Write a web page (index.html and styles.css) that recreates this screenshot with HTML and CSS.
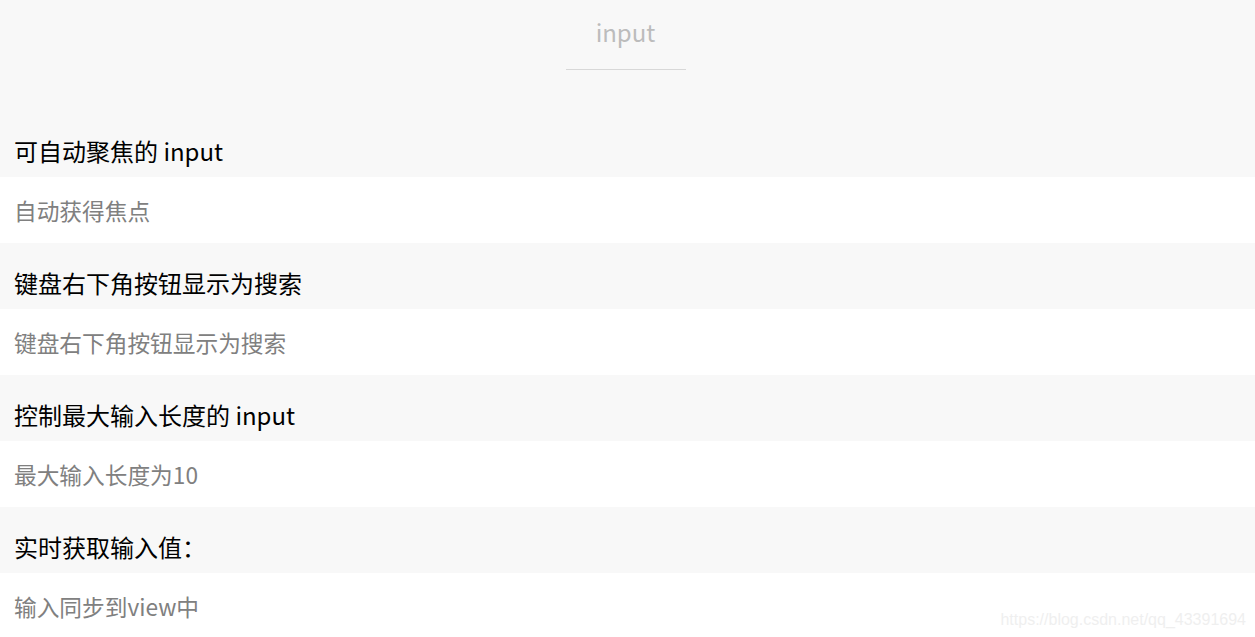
FILE: index.html
```html
<!DOCTYPE html>
<html lang="zh-CN">
<head>
<meta charset="utf-8">
<title>input</title>
<link rel="stylesheet" href="styles.css">
</head>
<body>
<div class="page">
  <div class="header">
    <div class="header-title">input</div>
    <div class="header-line"></div>
  </div>
  <div class="section">
    <div class="label">可自动聚焦的 input</div>
    <div class="field">自动获得焦点</div>
  </div>
  <div class="section">
    <div class="label">键盘右下角按钮显示为搜索</div>
    <div class="field">键盘右下角按钮显示为搜索</div>
  </div>
  <div class="section">
    <div class="label">控制最大输入长度的 input</div>
    <div class="field">最大输入长度为10</div>
  </div>
  <div class="section">
    <div class="label">实时获取输入值：</div>
    <div class="field">输入同步到view中</div>
  </div>
</div>
<div class="watermark">https://blog.csdn.net/qq_43391694</div>
</body>
</html>
```
FILE: styles.css
```css
html, body {
  margin: 0;
  padding: 0;
  background: #f8f8f8;
  overflow: hidden;
}
body {
  font-family: "Noto Sans CJK SC", "Noto Sans", sans-serif;
  width: 1255px;
  height: 637px;
  position: relative;
}
.page {
  display: flex;
  flex-direction: column;
}
.header {
  display: flex;
  flex-direction: column;
  align-items: center;
  padding-top: 12px;
  height: 111px;
  box-sizing: border-box;
}
.header-title {
  font-size: 24px;
  line-height: 40px;
  color: #bcbcbc;
  margin-left: -4px;
}
.header-line {
  margin-top: 17px;
  width: 120px;
  height: 1px;
  background: #d8d8d8;
  margin-left: -4px;
}
.label {
  height: 66px;
  box-sizing: border-box;
  padding: 23px 0 0 14px;
  font-size: 24px;
  line-height: 34px;
  color: #000;
}
.field {
  height: 66px;
  box-sizing: border-box;
  display: flex;
  align-items: center;
  padding-left: 14px;
  background: #fff;
  font-size: 22.7px;
  color: #808080;
}
.watermark {
  position: absolute;
  right: 9px;
  bottom: 8px;
  font-family: "Liberation Sans", Arial, sans-serif;
  font-size: 16px;
  color: #efefef;
}
```
